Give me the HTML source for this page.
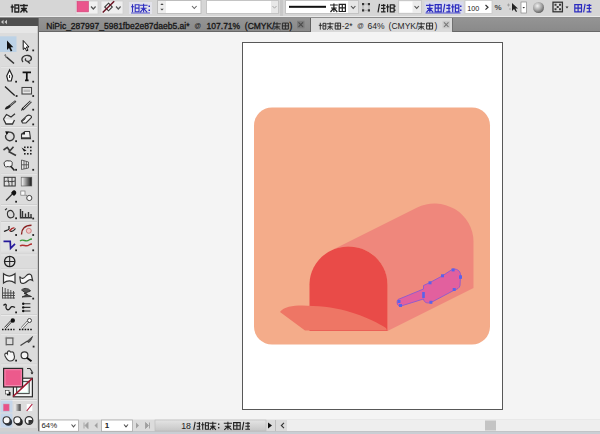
<!DOCTYPE html>
<html><head><meta charset="utf-8">
<style>
*{margin:0;padding:0;box-sizing:border-box;}
html,body{width:600px;height:434px;overflow:hidden;background:#f4f4f4;font-family:"Liberation Sans",sans-serif;position:relative;}
.a{position:absolute;}
.t{position:absolute;white-space:nowrap;line-height:1;}
.tb{-webkit-text-stroke:0.3px #161616;}
svg{position:absolute;left:0;top:0;}
</style></head><body>

<div class="a" style="left:0;top:0;width:600px;height:16px;background:#d6d6d6;"></div>
<div class="a" style="left:0;top:16px;width:600px;height:1px;background:#ebebeb;"></div>
<div class="a" style="left:0;top:17px;width:600px;height:1px;background:#8e8e8e;"></div>
<div class="a" style="left:38px;top:18px;width:562px;height:13px;background:linear-gradient(#949494,#8a8a8a);"></div>
<div class="a" style="left:38px;top:31px;width:562px;height:1px;background:#686868;"></div>
<div class="a" style="left:310px;top:18px;width:143px;height:14px;background:#dadada;border-left:1px solid #606060;border-right:1px solid #707070;"></div>
<div class="a" style="left:0;top:18px;width:38px;height:8px;background:#4f4f4f;"></div>
<div class="a" style="left:0;top:26px;width:38px;height:405px;background:#dcdcdc;"></div>
<div class="a" style="left:37px;top:26px;width:1px;height:405px;background:#c8c8c8;"></div>
<div class="a" style="left:38px;top:18px;width:1px;height:416px;background:#686868;"></div>
<div class="a" style="left:242px;top:42px;width:261px;height:368px;background:#fff;border:1.5px solid #585858;"></div>
<div class="a" style="left:39px;top:420px;width:561px;height:11px;background:#d6d6d6;"></div>
<div class="a" style="left:0;top:431px;width:600px;height:3px;background:#9a9a9a;"></div>
<div class="t tb" style="left:46.3px;top:22.0px;font-size:8.5px;color:#161616;font-weight:normal;letter-spacing:0px;">NiPic_287997_5981fbe2e87daeb5.ai*</div>
<div class="t " style="left:194.6px;top:23.3px;font-size:6.6px;color:#161616;font-weight:bold;letter-spacing:0px;">@</div>
<div class="t tb" style="left:206.6px;top:22.0px;font-size:8.5px;color:#161616;font-weight:normal;letter-spacing:0px;">107.71%</div>
<div class="t tb" style="left:244.8px;top:22.0px;font-size:8.5px;color:#161616;font-weight:normal;letter-spacing:0px;">(CMYK/</div>
<div class="t tb" style="left:289.6px;top:22.0px;font-size:8.5px;color:#161616;font-weight:normal;letter-spacing:0px;">)</div>
<div class="t " style="left:341.7px;top:22.0px;font-size:8.5px;color:#262626;font-weight:normal;letter-spacing:0px;">-2*</div>
<div class="t " style="left:357.2px;top:23.3px;font-size:6.6px;color:#333;font-weight:bold;letter-spacing:0px;">@</div>
<div class="t " style="left:367.5px;top:22.0px;font-size:8.5px;color:#262626;font-weight:normal;letter-spacing:0px;">64%</div>
<div class="t " style="left:388.6px;top:22.0px;font-size:8.5px;color:#262626;font-weight:normal;letter-spacing:0px;">(CMYK/</div>
<div class="t " style="left:434.4px;top:22.0px;font-size:8.5px;color:#262626;font-weight:normal;letter-spacing:0px;">)</div>
<svg width="600" height="434" viewBox="0 0 600 434"><path d="M273.2 23.8 H280.8 M277.0 22.3 V29.6 M274.2 26.8 H279.8 M277.0 26.8 L273.7 29.6 M277.0 26.8 L280.3 29.6" stroke="#262626" stroke-width="0.95" fill="none"/>
<path d="M282.4 23.1 H288.4 V29.1 H282.4 Z M282.4 25.9 H288.4 M285.4 23.1 V29.1" stroke="#262626" stroke-width="0.95" fill="none"/>
<path d="M320.3 22.8 V29.6 M318.8 25.3 H322.0 M323.0 23.3 H325.8 V29.1 H323.0 Z M323.0 25.9 H325.8" stroke="#262626" stroke-width="0.95" fill="none"/>
<path d="M326.6 23.8 H333.6 M330.1 22.3 V29.6 M327.6 26.8 H332.6 M330.1 26.8 L327.1 29.6 M330.1 26.8 L333.1 29.6" stroke="#262626" stroke-width="0.95" fill="none"/>
<path d="M335.2 23.1 H340.6 V29.1 H335.2 Z M335.2 25.9 H340.6 M337.9 23.1 V29.1" stroke="#262626" stroke-width="0.95" fill="none"/>
<path d="M417.4 23.8 H425.0 M421.2 22.3 V29.6 M418.4 26.8 H424.0 M421.2 26.8 L417.9 29.6 M421.2 26.8 L424.5 29.6" stroke="#262626" stroke-width="0.95" fill="none"/>
<path d="M426.6 23.1 H432.6 V29.1 H426.6 Z M426.6 25.9 H432.6 M429.6 23.1 V29.1" stroke="#262626" stroke-width="0.95" fill="none"/>
<rect x="297" y="20.8" width="7.5" height="7.5" fill="#7c7c7c"/><path d="M298.5 22.3 L303 26.8 M303 22.3 L298.5 26.8" stroke="#4a4a4a" stroke-width="1.1"/>
<rect x="442.5" y="20.8" width="7.5" height="7.5" fill="#cacaca"/><path d="M444 22.3 L448.5 26.8 M448.5 22.3 L444 26.8" stroke="#777" stroke-width="1.1"/>
<path d="M1 22 L3.5 19.8 V24.2 Z M4.5 22 L7 19.8 V24.2 Z" fill="#c8c8c8"/>
<path d="M12.2 4.5 V12.5 M10.7 7.0 H13.9 M14.9 5.0 H18.7 V12.0 H14.9 Z M14.9 8.2 H18.7" stroke="#222" stroke-width="1.3" fill="none"/>
<path d="M19.9 5.5 H27.9 M23.9 4.0 V12.5 M20.9 8.5 H26.9 M23.9 8.5 L20.4 12.5 M23.9 8.5 L27.4 12.5" stroke="#222" stroke-width="1.3" fill="none"/>
<rect x="76" y="1" width="22" height="13" fill="#f0f0f0" stroke="#d0d0d0" stroke-width="0.8"/>
<rect x="77" y="1.4" width="11.5" height="10.5" fill="#ea558c" stroke="#d04478" stroke-width="0.6"/>
<path d="M91 6.5 L93.3 9 L95.6 6.5" stroke="#555" stroke-width="1.2" fill="none"/>
<rect x="101" y="1" width="22" height="13" fill="#eeeeee" stroke="#d0d0d0" stroke-width="0.8"/>
<path d="M108.5 3.2 L112.3 7 L108.5 10.8 L104.7 7 Z" fill="#f6f6f6" stroke="#3a3a3a" stroke-width="1.1"/>
<path d="M102.7 12.5 L114.2 1.2" stroke="#6a1020" stroke-width="1.5"/>
<path d="M116 6.5 L118.3 9 L120.6 6.5" stroke="#555" stroke-width="1.2" fill="none"/>
<rect x="129" y="2" width="23" height="12" fill="#e2e2ea"/><rect x="131" y="12.6" width="19" height="0.8" fill="#3030c0"/>
<path d="M132.5 4.3 V12.3 M131.0 6.8 H134.2 M135.2 4.8 H139.0 V11.8 H135.2 Z M135.2 8.1 H139.0" stroke="#3030c0" stroke-width="1.1" fill="none"/>
<path d="M139.6 5.3 H147.6 M143.6 3.8 V12.3 M140.6 8.3 H146.6 M143.6 8.3 L140.1 12.3 M143.6 8.3 L147.1 12.3" stroke="#3030c0" stroke-width="1.1" fill="none"/>
<rect x="148.5" y="5.5" width="1.5" height="1.5" fill="#2c2cc0"/><rect x="148.5" y="9.5" width="1.5" height="1.5" fill="#2c2cc0"/>
<rect x="157.5" y="0.5" width="43.5" height="13" fill="#fff" stroke="#bdbdbd" stroke-width="1"/>
<rect x="158" y="1" width="8" height="12" fill="#ececec"/>
<path d="M160.3 5 L162 3.2 L163.7 5 Z M160.3 8.8 L162 10.6 L163.7 8.8 Z" fill="#444"/>
<path d="M192 6 L194.3 8.5 L196.6 6" stroke="#666" stroke-width="1.1" fill="none"/>
<rect x="206.5" y="0.5" width="72" height="13" fill="#fff" stroke="#c4c4c4" stroke-width="1"/>
<rect x="271" y="1" width="7" height="12" fill="#e8e8e8"/>
<path d="M272.5 6 L274.5 8.2 L276.5 6" stroke="#aaa" stroke-width="1" fill="none"/>
<rect x="280" y="0" width="3" height="16" fill="#c8c8c8"/>
<rect x="285.5" y="0.5" width="73" height="13" fill="#fff" stroke="#c4c4c4" stroke-width="1"/>
<rect x="289" y="5.8" width="37" height="2" fill="#111"/>
<rect x="348" y="1" width="10" height="12" fill="#e6e6e6"/>
<path d="M351 6 L353.2 8.4 L355.4 6" stroke="#555" stroke-width="1.1" fill="none"/>
<path d="M330.0 5.0 H337.8 M333.9 3.5 V12.0 M331.0 8.0 H336.8 M333.9 8.0 L330.5 12.0 M333.9 8.0 L337.3 12.0" stroke="#222" stroke-width="1.2" fill="none"/>
<path d="M339.2 4.3 H345.4 V11.5 H339.2 Z M339.2 7.8 H345.4 M342.3 4.3 V11.5" stroke="#222" stroke-width="1.2" fill="none"/>
<path d="M362 3 h2.2 v2.2 h-2.2z M367.8 3 h2.2 v2.2 h-2.2z M362 9.3 h2.2 v2.2 h-2.2z M367.8 9.3 h2.2 v2.2 h-2.2z" fill="#333"/><path d="M363 5.5 V9 M369 5.5 V9 M364.5 4 H367.5 M364.5 10.4 H367.5" stroke="#999" stroke-width="0.6"/>
<path d="M379.5 3.8 L378.0 12.3 M381.0 5.3 H385.5 M381.0 8.3 H385.5 M383.7 4.1 V12.3 M381.0 11.8 H385.5" stroke="#222" stroke-width="1.2" fill="none"/>
<path d="M387.6 4.3 V12.3 M386.1 6.8 H389.3 M390.3 4.8 H394.1 V11.8 H390.3 Z M390.3 8.1 H394.1" stroke="#222" stroke-width="1.2" fill="none"/>
<rect x="394" y="5.5" width="1.5" height="1.5" fill="#222"/><rect x="394" y="9.5" width="1.5" height="1.5" fill="#222"/>
<rect x="398.5" y="0.5" width="23" height="13" fill="#ececec" stroke="#c4c4c4" stroke-width="0.8"/>
<rect x="399.5" y="1.5" width="13" height="11" fill="#fff"/>
<path d="M414.5 6 L416.7 8.4 L418.9 6" stroke="#555" stroke-width="1.1" fill="none"/>
<rect x="424.5" y="1.5" width="39" height="12" fill="#d8daec"/><rect x="425.5" y="12.6" width="35" height="0.8" fill="#3030c0"/>
<path d="M426.0 5.3 H433.6 M429.8 3.8 V12.3 M427.0 8.3 H432.6 M429.8 8.3 L426.5 12.3 M429.8 8.3 L433.1 12.3" stroke="#2c2cc0" stroke-width="1.2" fill="none"/>
<path d="M435.2 4.6 H441.2 V11.8 H435.2 Z M435.2 8.1 H441.2 M438.2 4.6 V11.8" stroke="#2c2cc0" stroke-width="1.2" fill="none"/>
<path d="M444.8 3.8 L443.3 12.3 M446.3 5.3 H450.4 M446.3 8.3 H450.4 M449.0 4.1 V12.3 M446.3 11.8 H450.4" stroke="#2c2cc0" stroke-width="1.2" fill="none"/>
<path d="M452.7 4.3 V12.3 M451.2 6.8 H454.4 M455.4 4.8 H458.8 V11.8 H455.4 Z M455.4 8.1 H458.8" stroke="#2c2cc0" stroke-width="1.2" fill="none"/>
<rect x="460" y="5.5" width="1.5" height="1.5" fill="#2c2cc0"/><rect x="460" y="9.5" width="1.5" height="1.5" fill="#2c2cc0"/>
<rect x="465" y="0.5" width="27" height="13" fill="#fff" stroke="#c8c8c8" stroke-width="0.8"/>
<path d="M485.5 5 L488 7.3 L485.5 9.6" stroke="#333" stroke-width="1.2" fill="none"/>
<path d="M512 3 L512 11 L514 9 L516 12 L517 11.5 L515.5 8.5 L518 8.5 Z" fill="#222"/><path d="M507 5 h3 M508.5 3.5 v3 M509 9 h2" stroke="#999" stroke-width="0.8"/>
<rect x="521" y="2" width="5.5" height="11" fill="#fff" stroke="#888" stroke-width="0.7"/><path d="M522.5 7 L523.75 8.5 L525 7 Z" fill="#333"/>
<defs><radialGradient id="sph" cx="0.4" cy="0.35" r="0.7"><stop offset="0" stop-color="#f0f0f0"/><stop offset="0.55" stop-color="#a8a8a8"/><stop offset="1" stop-color="#585858"/></radialGradient></defs><circle cx="538.5" cy="7.5" r="5.5" fill="url(#sph)"/>
<rect x="553" y="2.2" width="9.4" height="9.6" fill="#d8d8d8" stroke="#333" stroke-width="1.3"/><path d="M554.5 3.8h2v2h-2z M559 3.8h2v2h-2z M556.7 6h2v2h-2z M554.5 8.2h2v2h-2z M559 8.2h2v2h-2z" fill="#3a3a3a"/>
<path d="M565.5 6.5 L567 8.5 L568.5 6.5 Z" fill="#333"/>
<path d="M574.8 4.6 H581.5 V11.8 H574.8 Z M574.8 8.1 H581.5 M578.1 4.6 V11.8" stroke="#2c2cc0" stroke-width="1.2" fill="none"/>
<path d="M585.1 3.8 L583.6 12.3 M586.6 5.3 H591.4 M586.6 8.3 H591.4 M589.3 4.1 V12.3 M586.6 11.8 H591.4" stroke="#2c2cc0" stroke-width="1.2" fill="none"/></svg>
<div class="t " style="left:467.2px;top:4.6px;font-size:7.2px;color:#222;font-weight:normal;letter-spacing:0px;">100</div>
<div class="t " style="left:494.5px;top:4.2px;font-size:8px;color:#444;font-weight:bold;letter-spacing:0px;">%</div>
<svg width="600" height="434" viewBox="0 0 600 434"><rect x="0" y="26" width="37" height="7" fill="#e6e6e6"/>
<rect x="0" y="36.3" width="16.5" height="15.7" fill="#bcd2e6"/>
<path d="M7 40.5 L7 50 L9 48 L10.8 51.5 L12.3 50.8 L10.6 47.3 L13.3 47.3 Z" fill="#111"/>
<path d="M23.2 40.5 L23.2 49.5 L25 47.8 L26.6 51 L28 50.3 L26.4 47 L29 47 Z" fill="#fff" stroke="#111" stroke-width="1"/>
<rect x="32.3" y="49.5" width="1.8" height="1.8" fill="#222"/>
<path d="M6.5 57 L14 63.5" stroke="#333" stroke-width="1.6"/><path d="M4 55 l3 1.5 M5.5 54 v3.5" stroke="#777" stroke-width="0.9"/>
<path d="M23 62 C20 58 24 55 28 55.5 C32 56 32.5 59.5 29.5 61 C27 62 24 60 26 58.5 M27 61 L30 63.5" stroke="#333" stroke-width="1.3" fill="none"/>
<rect x="1" y="66" width="36" height="0.7" fill="#c4c4c4"/><rect x="1" y="66.7" width="36" height="0.7" fill="#f2f2f2"/>
<path d="M9.6 70 L12.5 76 L11.2 81 L8 81 L6.7 76 Z" fill="#fff" stroke="#222" stroke-width="1.2"/><path d="M9.6 75 v3" stroke="#222" stroke-width="1"/>
<rect x="15.2" y="80.8" width="1.8" height="1.8" fill="#222"/>
<path d="M22.6 72.3 H31 M26.8 72 V80.3 M25 80.3 H28.6" stroke="#111" stroke-width="1.7"/>
<rect x="32.3" y="80.8" width="1.8" height="1.8" fill="#222"/>
<path d="M5 86.5 L14.7 95.5" stroke="#222" stroke-width="1.3"/>
<rect x="15.7" y="95.1" width="1.8" height="1.8" fill="#222"/>
<rect x="22" y="87.5" width="9.5" height="6.5" fill="#e8e8e8" stroke="#444" stroke-width="1.1"/><rect x="23.5" y="89.5" width="6.5" height="2.5" fill="#bbb"/>
<rect x="32.3" y="95.1" width="1.8" height="1.8" fill="#222"/>
<path d="M15.7 101 L9 106.5" stroke="#333" stroke-width="2.2"/><path d="M15.2 101.3 L10 105.6" stroke="#bbb" stroke-width="0.7"/><path d="M9.8 105.5 C7 105.5 4.8 107.8 4.8 109.6 C7.5 109.6 10 108 10.8 106.5 Z" fill="#222"/>
<path d="M30.9 101.4 L22.5 109.5" stroke="#333" stroke-width="2.6"/><path d="M30.9 101.4 L22.5 109.5" stroke="#ddd" stroke-width="1"/><path d="M21.5 110.5 L23 108" stroke="#111" stroke-width="1.2"/>
<rect x="32.3" y="108.8" width="1.8" height="1.8" fill="#222"/>
<path d="M3.5 119 L6.5 114.5 L11 117 L15 113.8 M3.5 119 L6 124 H12.5 L14.5 120" stroke="#333" stroke-width="1.3" fill="#f4f4f4"/>
<path d="M21.5 121 L27 115.7 C29 114.5 32 115.5 31.5 117.5 L26 123 H22.5 Z" fill="#f0f0f0" stroke="#333" stroke-width="1.1"/><path d="M22 121.5 L25.5 118.5" stroke="#333" stroke-width="1"/>
<rect x="32.3" y="123.5" width="1.8" height="1.8" fill="#222"/>
<rect x="1" y="126.5" width="36" height="0.7" fill="#c4c4c4"/><rect x="1" y="127.2" width="36" height="0.7" fill="#f2f2f2"/>
<path d="M8.5 132.4 A4.3 4.3 0 1 1 5.8 135" stroke="#3a3a3a" stroke-width="1.4" fill="none"/><path d="M5.2 131.3 L9.3 131.6 L6.6 135.2 Z" fill="#111"/>
<path d="M21.5 138.8 L21.5 134 L25 131.5 L29.5 131.5 L30.5 138.8 Z" fill="#f0f0f0" stroke="#333" stroke-width="1.1"/><path d="M21.5 134.5 L25 131.5 L25 134.5 Z" fill="#222"/><path d="M22 138 H30" stroke="#222" stroke-width="1.3"/>
<rect x="15.2" y="140.3" width="1.8" height="1.8" fill="#222"/>
<rect x="32.3" y="140.3" width="1.8" height="1.8" fill="#222"/>
<path d="M3.5 150 L7.2 147.3 L9.8 151 L13.5 146.8 M8.5 151.5 L16 155.5" stroke="#3a3a3a" stroke-width="1.6" fill="none" stroke-linejoin="round"/>
<path d="M21.5 147.5 L26.5 150.5 L24 151.5 Z" fill="#111"/>
<rect x="24" y="146.5" width="1.6" height="1.6" fill="#222"/>
<rect x="27" y="146.5" width="1.6" height="1.6" fill="#222"/>
<rect x="30" y="146.5" width="1.6" height="1.6" fill="#222"/>
<rect x="30" y="149.8" width="1.6" height="1.6" fill="#222"/>
<rect x="30" y="153" width="1.6" height="1.6" fill="#222"/>
<rect x="27" y="153" width="1.6" height="1.6" fill="#222"/>
<rect x="24" y="153" width="1.6" height="1.6" fill="#222"/>
<path d="M4.5 165 C3 162 6 160 9 161 C11 160.5 13 162 12 164 C13 166 10 167.5 8 166.5 C6 167.5 4 166.5 4.5 165 Z" fill="#f4f4f4" stroke="#333" stroke-width="1"/><path d="M10.5 166 L14.5 170.5" stroke="#222" stroke-width="1.6"/>
<path d="M21.5 160 L28.5 162 V168 L21.5 169.5 Z M24 160.7 V169 M26.3 161.4 V168.5 M21.5 164.8 H28.5" stroke="#444" stroke-width="0.8" fill="#e8e8e8"/>
<rect x="15.2" y="168.9" width="1.8" height="1.8" fill="#222"/>
<rect x="32.3" y="168.9" width="1.8" height="1.8" fill="#222"/>
<rect x="1" y="173" width="36" height="0.7" fill="#c4c4c4"/><rect x="1" y="173.7" width="36" height="0.7" fill="#f2f2f2"/>
<rect x="4.2" y="177.3" width="11" height="8.7" fill="#e0e0e0" stroke="#333" stroke-width="1"/><path d="M4.5 181.5 C7 180 11 183 15 181 M8 177.5 C7.5 180 9.5 183 9 186 M12 177.5 V186" stroke="#333" stroke-width="0.9" fill="none"/>
<defs><linearGradient id="grd" x1="0" x2="1"><stop offset="0" stop-color="#fff"/><stop offset="1" stop-color="#111"/></linearGradient></defs><rect x="21.2" y="177.2" width="10.6" height="8.8" fill="url(#grd)" stroke="#555" stroke-width="0.6"/>
<path d="M14.7 191.5 L6 200.5" stroke="#333" stroke-width="1.2"/><path d="M11 193 L14 196 L15.8 194.2 C16.5 193.5 16.5 191.5 15.3 190.8 C14.5 190 13 190.2 12.5 191 Z" fill="#111"/>
<rect x="15.2" y="200.8" width="1.8" height="1.8" fill="#222"/>
<rect x="20.8" y="191" width="4.2" height="4.2" fill="#fafafa" stroke="#777" stroke-width="0.7"/><circle cx="29.3" cy="198" r="2.6" fill="#fafafa" stroke="#444" stroke-width="1"/><circle cx="26.2" cy="195.5" r="0.8" fill="#888"/>
<rect x="1" y="204.5" width="36" height="0.7" fill="#c4c4c4"/><rect x="1" y="205.2" width="36" height="0.7" fill="#f2f2f2"/>
<path d="M5 210 L7 208.5 M8.5 211 C12 209 14.5 213 13.8 216 C13 218 10 218.5 8.5 217 C7 215.5 7 212 8.5 211 Z" stroke="#333" stroke-width="1.1" fill="#d8d8d8"/>
<rect x="15.2" y="217.4" width="1.8" height="1.8" fill="#222"/>
<path d="M20.5 209 V217.8 H32 M22.5 217.5 V211 M25.5 217.5 V213.5 M28.5 217.5 V212 M31 217.5 V214" stroke="#333" stroke-width="1.4" fill="none"/>
<rect x="32.3" y="217.6" width="1.8" height="1.8" fill="#222"/>
<rect x="1" y="221.3" width="36" height="0.7" fill="#c4c4c4"/><rect x="1" y="222.0" width="36" height="0.7" fill="#f2f2f2"/>
<rect x="1" y="222.5" width="36" height="29" fill="#e2e2e2"/>
<path d="M4 231.5 C6 230.5 8 230.5 9 229 L9 226 M10 231 C12 232 14.5 230 15.5 228.5" stroke="#222" stroke-width="1.3" fill="none"/><path d="M9.5 231 C11 229 13 227.5 14.5 228" stroke="#b02828" stroke-width="1.3" fill="none"/>
<path d="M21.5 234.5 C21.5 229 25 225.3 31.5 225.3" stroke="#8a2020" stroke-width="1.4" fill="none"/><circle cx="28.8" cy="230.8" r="2.5" fill="#f0c8c8" stroke="#c05050" stroke-width="0.6"/>
<rect x="15.2" y="234.1" width="1.8" height="1.8" fill="#222"/>
<rect x="32.3" y="234.1" width="1.8" height="1.8" fill="#222"/>
<path d="M3.5 241.3 H10.2 L10.6 248.3 L15 243.8" stroke="#24189a" stroke-width="1.7" fill="none"/>
<path d="M20 241 C23 238.5 26 242.5 29 240 C30 239.3 31 239 32 239" stroke="#3a9a3a" stroke-width="1.3" fill="none"/><path d="M20 246 C23 243.5 26 247.5 29 245 C30 244.3 31 244 32 244" stroke="#b03030" stroke-width="1.4" fill="none"/>
<rect x="15.2" y="249.4" width="1.8" height="1.8" fill="#222"/>
<rect x="32.3" y="249.4" width="1.8" height="1.8" fill="#222"/>
<rect x="1" y="253.8" width="36" height="0.7" fill="#c4c4c4"/><rect x="1" y="254.5" width="36" height="0.7" fill="#f2f2f2"/>
<circle cx="9.7" cy="261.5" r="5.2" fill="none" stroke="#222" stroke-width="1.3"/><path d="M9.7 256.5 V266.5 M4.7 261.5 H14.7" stroke="#222" stroke-width="1"/>
<rect x="1" y="268.7" width="36" height="0.7" fill="#c4c4c4"/><rect x="1" y="269.4" width="36" height="0.7" fill="#f2f2f2"/>
<path d="M3.5 273.8 C7 276.5 11.5 276.5 15 273.8 L15 283 C11.5 280.5 7 280.5 3.5 283 Z" fill="#f8f8f8" stroke="#333" stroke-width="1.2"/>
<path d="M19.7 276.5 C21.5 279.5 24 278.5 26 276 C28 273.5 30.5 273.5 31.5 275.5 L32.6 280.4 C30.5 279 29 279.5 27.5 281 C25.5 283 22.5 284.5 20.6 282.3 Z" fill="#f8f8f8" stroke="#333" stroke-width="1.2"/>
<path d="M2.5 287 V298.5 M5.2 288 V298.5 M8 289 V298.5 M10.8 290 V298.5 M13.5 291 V298.5 M2.5 293 H15 M2.5 295.5 H15 M2.5 298 H15" stroke="#444" stroke-width="0.9"/>
<path d="M21.5 290 C24 287.5 29 288 30.5 291 L24 293.5 L31.5 296.5 L22 297 L27.5 294.5 Z" fill="#555" stroke="#222" stroke-width="0.8"/>
<rect x="32.3" y="297.7" width="1.8" height="1.8" fill="#222"/>
<path d="M3.5 305.5 C5 303.5 7 304 6 306.5 C5.5 308.5 7.5 311 9.5 309 C11 307 12 305.5 15 307.5" stroke="#222" stroke-width="1.3" fill="none"/>
<rect x="15.2" y="311.5" width="1.8" height="1.8" fill="#222"/>
<path d="M24 303.8 H30.4 M24 307.4 H30.4 M24 311 H30.4" stroke="#333" stroke-width="1.1"/><circle cx="23.2" cy="303.8" r="1.2" fill="#111"/><circle cx="23.2" cy="307.4" r="1.2" fill="#111"/><circle cx="23.2" cy="311" r="1.2" fill="#111"/>
<rect x="1" y="314.5" width="36" height="0.7" fill="#c4c4c4"/><rect x="1" y="315.2" width="36" height="0.7" fill="#f2f2f2"/>
<path d="M5 328 L11 321.5" stroke="#333" stroke-width="2.2"/><path d="M5 328 L11 321.5" stroke="#f4f4f4" stroke-width="1"/><circle cx="12.8" cy="320.5" r="2.2" fill="#111"/><path d="M2 329.5 H14.5" stroke="#111" stroke-width="1.6" stroke-dasharray="1.6 1.2"/>
<path d="M22 328 L28 321.5" stroke="#333" stroke-width="2.4"/><path d="M22 328 L28 321.5" stroke="#fafafa" stroke-width="1.2"/><circle cx="29.5" cy="320.5" r="2" fill="#fafafa" stroke="#333" stroke-width="0.9"/><path d="M19 329.5 H31.8" stroke="#111" stroke-width="1.6" stroke-dasharray="1.6 1.2"/>
<rect x="1" y="333" width="36" height="0.7" fill="#c4c4c4"/><rect x="1" y="333.7" width="36" height="0.7" fill="#f2f2f2"/>
<rect x="6.2" y="338" width="6.7" height="6.7" fill="none" stroke="#444" stroke-width="1"/><path d="M4.8 338 h9.5 M6.2 336.5 v9.5" stroke="#888" stroke-width="0.5"/>
<path d="M20.5 345.5 L27.5 341" stroke="#444" stroke-width="1.3"/><path d="M27 341.5 L32.5 336.5 L31 340 L29 342.5 Z" fill="#555" stroke="#333" stroke-width="0.8"/>
<rect x="32.7" y="345.7" width="1.8" height="1.8" fill="#222"/>
<path d="M5 356 C4 353 6.5 352.5 7.5 354 L7.5 352 C8 350.5 10 350.5 10.5 352 L11.5 352 C12.5 351.5 14 352.5 13.8 354 L14.5 356.5 C14.5 359.5 12.5 361 10 361 C8 361 6.5 359 5 356 Z" fill="#f6f6f6" stroke="#333" stroke-width="1.1"/>
<rect x="15.2" y="359.7" width="1.8" height="1.8" fill="#222"/>
<circle cx="24.5" cy="355.3" r="3.4" fill="#f6f6f6" stroke="#333" stroke-width="1.2"/><path d="M26.8 357.8 L31.5 361.2" stroke="#111" stroke-width="2"/>
<rect x="1" y="363.8" width="36" height="0.7" fill="#c4c4c4"/><rect x="1" y="364.5" width="36" height="0.7" fill="#f2f2f2"/>
<rect x="13.4" y="378.2" width="19" height="18.6" fill="#f6f6f6" stroke="#2a2a2a" stroke-width="1.2"/><rect x="16.6" y="381.4" width="12.6" height="12.2" fill="#d8f0e8" stroke="#444" stroke-width="1"/><rect x="18.3" y="383.1" width="9.2" height="8.8" fill="#fff"/>
<rect x="3.6" y="368.4" width="19" height="18.6" fill="#ec5a8c" stroke="#2a2a2a" stroke-width="1.2"/><rect x="5" y="369.8" width="16.2" height="15.8" fill="none" stroke="#f8a0c0" stroke-width="0.7"/>
<path d="M13 396.5 L32.3 378.3" stroke="#a01830" stroke-width="1.6"/>
<path d="M27 368.5 L30 368.5 L32 371.5 L32 373.5" stroke="#333" stroke-width="1.1" fill="none"/><path d="M30.5 372.5 L32 374.5 L33.5 372.5 Z" fill="#222"/>
<rect x="7" y="392" width="3.5" height="3.5" fill="#111"/><rect x="5.5" y="390.5" width="3.5" height="3.5" fill="#fff" stroke="#333" stroke-width="0.6"/>
<rect x="1" y="399.3" width="36" height="0.7" fill="#c4c4c4"/><rect x="1" y="400.0" width="36" height="0.7" fill="#f2f2f2"/>
<rect x="0.5" y="400.5" width="12" height="12" fill="#c5d6ea"/>
<rect x="3.2" y="404" width="6" height="7" fill="#e8528a" stroke="#c8a0b0" stroke-width="0.5"/>
<defs><linearGradient id="grd2" x1="0" x2="1"><stop offset="0" stop-color="#f8f8f8"/><stop offset="0.5" stop-color="#999"/><stop offset="1" stop-color="#444"/></linearGradient></defs><rect x="14.7" y="404" width="6" height="7" fill="url(#grd2)"/>
<rect x="26.7" y="404" width="5.6" height="7" fill="#fff"/><path d="M26.7 411 L32.3 404" stroke="#b02040" stroke-width="1.2"/>
<rect x="0.5" y="413.5" width="12" height="14" fill="#c5d6ea"/>
<circle cx="8.3" cy="422" r="3.8" fill="#2a3440"/><circle cx="6.6" cy="420.3" r="3.5" fill="#f8f8f8" stroke="#333" stroke-width="1.1"/>
<circle cx="19" cy="422" r="3.8" fill="#222"/><circle cx="17.3" cy="420.3" r="3.5" fill="#f8f8f8" stroke="#333" stroke-width="1.1"/>
<circle cx="29" cy="420.5" r="3.8" fill="#f8f8f8" stroke="#333" stroke-width="1.3"/><path d="M28.5 420 L32.6 420 A3.6 3.6 0 0 1 28.5 424.1 Z" fill="#333"/><path d="M29 420.5 h3 v-0.01" fill="none"/></svg>
<svg width="600" height="434" viewBox="0 0 600 434"><rect x="39" y="419.5" width="561" height="12" fill="#dcdcdc"/>
<rect x="0" y="428" width="38" height="4" fill="#d0d0d0"/>
<rect x="0" y="431.5" width="600" height="2.5" fill="#c9ced4"/>
<rect x="39.5" y="420" width="39" height="11.3" fill="#fff" stroke="#a8a8a8" stroke-width="0.8"/>
<path d="M71.5 424.5 L73.5 426.8 L75.5 424.5" stroke="#555" stroke-width="1.1" fill="none"/>
<path d="M84 422.5 V428.5 M88 422.5 L85 425.5 L88 428.5 Z" stroke="#a0a0a0" stroke-width="0.9" fill="#a0a0a0"/>
<path d="M97.5 422.5 L94.5 425.5 L97.5 428.5 Z" fill="#a0a0a0"/>
<rect x="101.5" y="420" width="31" height="11.3" fill="#fff" stroke="#a8a8a8" stroke-width="0.8"/>
<path d="M124 424.5 L126 426.8 L128 424.5" stroke="#555" stroke-width="1.1" fill="none"/>
<path d="M136 422.5 L139 425.5 L136 428.5 Z" fill="#a0a0a0"/>
<path d="M145.5 422.5 L148.5 425.5 L145.5 428.5 Z M149.5 422.5 V428.5" stroke="#a0a0a0" stroke-width="0.9" fill="#a0a0a0"/>
<defs><linearGradient id="stg" x1="0" y1="0" x2="0" y2="1"><stop offset="0" stop-color="#e4e4e4"/><stop offset="1" stop-color="#c6c6c6"/></linearGradient></defs>
<rect x="155" y="420" width="111" height="11" fill="url(#stg)" stroke="#b8b8b8" stroke-width="0.6"/>
<path d="M195.2 421.8 L193.7 429.8 M196.7 423.3 H200.4 M196.7 426.3 H200.4 M199.4 422.1 V429.8 M196.7 429.3 H200.4" stroke="#222" stroke-width="1.1" fill="none"/>
<path d="M202.7 422.3 V429.8 M201.2 424.8 H204.4 M205.4 422.8 H208.4 V429.3 H205.4 Z M205.4 425.8 H208.4" stroke="#222" stroke-width="1.1" fill="none"/>
<path d="M209.2 423.3 H216.4 M212.8 421.8 V429.8 M210.2 426.3 H215.4 M212.8 426.3 L209.7 429.8 M212.8 426.3 L215.9 429.8" stroke="#222" stroke-width="1.1" fill="none"/>
<rect x="218" y="423.5" width="1.4" height="1.4" fill="#222"/><rect x="218" y="427" width="1.4" height="1.4" fill="#222"/>
<path d="M223.8 423.3 H232.0 M227.9 421.8 V429.8 M224.8 426.3 H231.0 M227.9 426.3 L224.3 429.8 M227.9 426.3 L231.5 429.8" stroke="#222" stroke-width="1.1" fill="none"/>
<path d="M233.6 422.6 H240.2 V429.3 H233.6 Z M233.6 425.8 H240.2 M236.9 422.6 V429.3" stroke="#222" stroke-width="1.1" fill="none"/>
<path d="M243.8 421.8 L242.3 429.8 M245.3 423.3 H250.0 M245.3 426.3 H250.0 M248.0 422.1 V429.8 M245.3 429.3 H250.0" stroke="#222" stroke-width="1.1" fill="none"/>
<path d="M268 422.5 L272 425.5 L268 428.5 Z" fill="#111"/>
<rect x="275" y="420" width="1" height="11" fill="#bdbdbd"/>
<path d="M284 422.8 L281.3 425.5 L284 428.2" stroke="#333" stroke-width="1.1" fill="none"/>
<rect x="287" y="420" width="313" height="11" fill="#eeeeee"/>
<rect x="485" y="420.5" width="11" height="10" fill="#c4c4c4"/></svg>
<div class="t " style="left:41.5px;top:422.3px;font-size:7.8px;color:#222;font-weight:normal;letter-spacing:0px;">64%</div>
<div class="t " style="left:104.8px;top:422.2px;font-size:8px;color:#222;font-weight:bold;letter-spacing:0px;">1</div>
<div class="t " style="left:181.2px;top:421.6px;font-size:8.8px;color:#222;font-weight:normal;letter-spacing:0px;">18</div>
<svg width="600" height="434" viewBox="0 0 600 434">
  <rect x="254" y="107.5" width="236" height="237" rx="18" fill="#f4ac8a"/>
  <path d="M330.7 250.7 L416.7 207.7 A39 38 0 0 1 473.5 241.5 L473.5 288 L387.5 331 L387.5 284.5 A39 38 0 0 0 330.7 250.7 Z" fill="#ef877c"/>
  <path d="M309.5 331 L309.5 284.5 C309.5 263.5 327 246.5 348.5 246.5 C370 246.5 387.5 263.5 387.5 284.5 L387.5 331 Z" fill="#e94b48"/>
  <path d="M280 312 C285 305 300 305 313 306 C345 307 370 318 386 328 L387 330.5 L305 330.5 Z" fill="#ee7665"/>
  <path d="M398 299.5 L423.5 289 L423.5 285.5 L430 282.5 L442.5 275.8 L452 269.5 C456 268 460.5 270.5 460.5 275 L460 285.5 C459.5 288 457 289.5 454.5 290 L431 302.5 C428 303.5 424 303 423.5 299 L401 306 C397.5 307 396 302 398 299.5 Z" fill="#e2609e" stroke="#8a5ad0" stroke-width="0.9"/>
  <g fill="#5a62ea">
    <rect x="397.5" y="300" width="3" height="3"/><rect x="399" y="304" width="3" height="3"/>
    <rect x="422.2" y="292" width="2.6" height="6"/>
    <rect x="428.5" y="281.3" width="3" height="3"/><rect x="441" y="274.3" width="3" height="3"/>
    <rect x="451.6" y="268.4" width="3" height="3"/><rect x="459" y="275.3" width="3" height="3.5"/>
    <rect x="452.7" y="288" width="3" height="3"/><rect x="429.4" y="300.8" width="3" height="3"/>
  </g>
</svg>
</body></html>
